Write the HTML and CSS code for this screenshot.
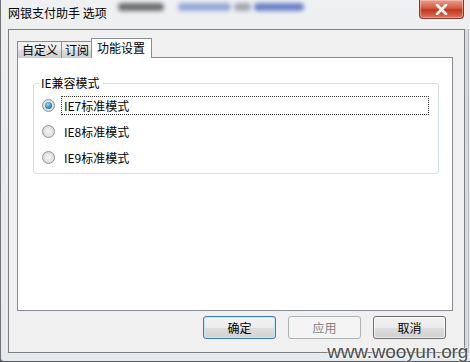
FILE: index.html
```html
<!DOCTYPE html>
<html lang="zh-CN">
<head>
  <meta charset="UTF-8" />
  <title>网银支付助手 选项</title>
  <link rel="stylesheet" href="styles.css">
</head>
<body>
  <div class="window">
    <div class="titlebar">
      <span class="blob blob-gray"></span>
      <span class="blob blob-blue"></span>
      <span class="blob blob-mid"></span>
      <span class="blob blob-dark"></span>
      <span class="title">网银支付助手 选项</span>
      <button class="close" aria-label="关闭">
        <svg width="13" height="11" viewBox="0 0 13 11">
          <path d="M2 1 L11 10 M11 1 L2 10" stroke="#fff" stroke-width="2.6" stroke-linecap="round" />
          <path d="M2 1 L11 10 M11 1 L2 10" stroke="#f4f4f4" stroke-width="1.6" stroke-linecap="round" />
        </svg>
      </button>
    </div>

    <div class="client">
      <div class="tabs">
        <div class="tab">自定义</div>
        <div class="tab">订阅</div>
        <div class="tab active">功能设置</div>
      </div>
      <div class="panel">
        <fieldset class="group">
          <legend>IE兼容模式</legend>
          <label class="option">
            <span class="radio checked"></span>
            <span class="option-text focused">IE7标准模式</span>
          </label>
          <label class="option">
            <span class="radio"></span>
            <span class="option-text">IE8标准模式</span>
          </label>
          <label class="option">
            <span class="radio"></span>
            <span class="option-text">IE9标准模式</span>
          </label>
        </fieldset>
      </div>
      <div class="actions">
        <button class="btn default">确定</button>
        <button class="btn" disabled>应用</button>
        <button class="btn">取消</button>
      </div>
    </div>
  </div>
  <div class="watermark">www.wooyun.org</div>
</body>
</html>
```

FILE: styles.css
```css
* {
  box-sizing: border-box;
}
body {
  margin: 0;
  width: 470px;
  height: 362px;
  overflow: hidden;
  background: #4a5563;
  font-family: "Noto Sans CJK SC", "Noto Sans", sans-serif;
  font-size: 12px;
  color: #000;
  position: relative;
}
.window {
  width: 470px;
  height: 362px;
  padding: 0 0 8px 7px;
  background: linear-gradient(to bottom, #eef0f2 0%, #e9ecef 40%, #e7eaed 100%);
  border-left: 1px solid #6f7378;
  border-bottom: 1px solid #55595e;
  border-bottom-left-radius: 4px;
  display: flex;
  flex-direction: column;
}
.titlebar {
  height: 29px;
  padding-right: 6px;
  position: relative;
  display: flex;
  align-items: flex-start;
}
.blob {
  position: absolute;
  top: 3px;
  height: 8px;
  border-radius: 4px;
  filter: blur(2px);
}
.blob-gray { left: 110px; width: 46px; background: #6f6f6f; }
.blob-blue { left: 170px; width: 53px; background: #95a8d8; }
.blob-mid { left: 226px; width: 17px; background: #a3a7b3; }
.blob-dark { left: 246px; width: 50px; background: #6c82c8; }
.title {
  margin-top: 5px;
  line-height: 16px;
  position: relative;
}
.close {
  margin-left: auto;
  width: 45px;
  height: 19px;
  border: 1px solid #7a3a32;
  border-top: none;
  border-radius: 0 0 4px 4px;
  background: linear-gradient(to bottom, #e8a08f 0%, #d45a44 45%, #c1381f 55%, #d9735a 100%);
  box-shadow: inset 0 0 0 1px rgba(255, 210, 200, 0.5);
  display: flex;
  align-items: center;
  justify-content: center;
  padding: 0;
}
.body-row {
  display: flex;
}
.client {
  flex: 1;
  margin-right: 5px;
  border: 1px solid #7c7f83;
  background: #f0f0f0;
  padding: 8px 11px 0 8px;
  display: flex;
  flex-direction: column;
  box-shadow: 3px 0 0 #d8dbde, 4px 0 0 #b9bdc2;
}
.tabs {
  display: flex;
  align-items: flex-end;
  height: 20px;
  position: relative;
  z-index: 1;
  margin-bottom: -1px;
}
.tab {
  height: 17px;
  padding: 0 3px;
  line-height: 15px;
  border: 1px solid #898c95;
  border-bottom: none;
  margin-right: -1px;
  background: linear-gradient(to bottom, #f2f2f2 0%, #ebebeb 50%, #dddddd 51%, #cfcfcf 100%);
}
.tab:first-child {
  padding: 0 3px 0 4px;
}
.tab.active {
  height: 20px;
  padding: 0 6px 0 5px;
  line-height: 17px;
  background: #fff;
  margin-left: -1px;
  margin-right: 0;
}
.panel {
  width: 436px;
  height: 254px;
  border: 1px solid #898c95;
  background: #fff;
  padding: 18px 0 0 15px;
}
.group {
  margin: 0;
  width: 406px;
  height: 98px;
  border: 1px solid #d5dfe5;
  border-radius: 3px;
  padding: 2px 0 0 8px;
}
.group legend {
  padding: 0 2px;
  margin-left: -3px;
  line-height: 14px;
}
.option {
  display: flex;
  align-items: center;
  height: 26px;
}
.radio {
  width: 13px;
  height: 13px;
  border-radius: 50%;
  border: 1px solid #8f8f8f;
  background: radial-gradient(circle at 50% 50%, #f4f4f4 0%, #e2e2e2 55%, #cfcfcf 100%);
  display: flex;
  align-items: center;
  justify-content: center;
  margin-right: 6px;
}
.radio.checked::after {
  content: "";
  width: 7px;
  height: 7px;
  border-radius: 50%;
  background: radial-gradient(circle at 40% 35%, #9fd6f2 0%, #2f88c4 55%, #14547e 100%);
}
.option-text {
  line-height: 17px;
  padding: 0 2px;
  border: 1px dotted transparent;
}
.option-text.focused {
  border-color: #333;
  width: 368px;
}
.actions {
  display: flex;
  gap: 12px;
  margin-top: 5px;
  padding-left: 186px;
}
.btn {
  width: 73px;
  height: 23px;
  padding: 0;
  font-family: inherit;
  font-size: 12px;
  color: #000;
  border: 1px solid #707070;
  border-radius: 3px;
  background: linear-gradient(to bottom, #f2f2f2 0%, #ebebeb 50%, #dddddd 51%, #cfcfcf 100%);
  box-shadow: inset 0 0 0 1px rgba(255, 255, 255, 0.7);
}
.btn.default {
  border-color: #3c7fb1;
  box-shadow: inset 0 0 0 1px #c4e5f6;
  background: linear-gradient(to bottom, #f4f4f4 0%, #ececec 50%, #dedede 51%, #d2d2d2 100%);
}
.btn:disabled {
  border-color: #adb2b5;
  background: #f4f4f4;
  color: #838383;
  box-shadow: none;
}
.watermark {
  position: absolute;
  right: 2px;
  bottom: -1px;
  font-family: "Liberation Sans", sans-serif;
  font-size: 19px;
  line-height: 22px;
  color: #4d4d4d;
  letter-spacing: -0.2px;
  text-shadow: 0 0 2px #fff, 0 0 2px #fff;
}
```
